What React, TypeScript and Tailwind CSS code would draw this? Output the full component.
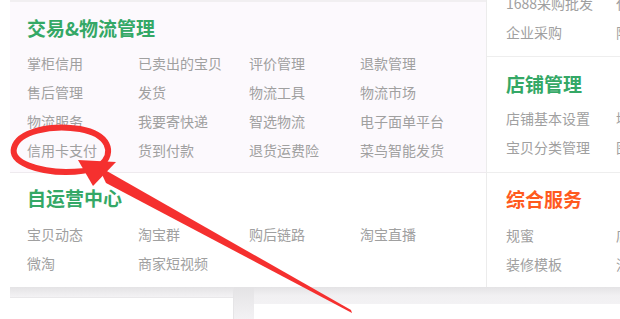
import React from 'react';

const leftTop = [
  ['掌柜信用', '已卖出的宝贝', '评价管理', '退款管理'],
  ['售后管理', '发货', '物流工具', '物流市场'],
  ['物流服务', '我要寄快递', '智选物流', '电子面单平台'],
  ['信用卡支付', '货到付款', '退货运费险', '菜鸟智能发货'],
];

const leftBottom = [
  ['宝贝动态', '淘宝群', '购后链路', '淘宝直播'],
  ['微淘', '商家短视频', '', ''],
];

const Cell = ({ text, w }: { text: string; w: string }) => (
  <div className={`${w} h-[29px] leading-[29px] text-[14px] text-[#a0a0a0] whitespace-nowrap shrink-0`}>{text}</div>
);

function Rows({ rows }: { rows: string[][] }) {
  return (
    <div className="flex flex-col">
      {rows.map((r, i) => (
        <div key={i} className="flex">
          {r.map((t, j) => (
            <Cell key={j} text={t} w="w-[111px]" />
          ))}
        </div>
      ))}
    </div>
  );
}

function RightRows({ rows }: { rows: string[][] }) {
  return (
    <div className="flex flex-col">
      {rows.map((r, i) => (
        <div key={i} className="flex">
          {r.map((t, j) => (
            <Cell key={j} text={t} w="w-[110px]" />
          ))}
        </div>
      ))}
    </div>
  );
}

export default function App() {
  return (
    <div
      className="relative w-[620px] h-[319px] overflow-hidden bg-white"
      style={{ fontFamily: '"Noto Sans CJK SC", "Noto Sans", sans-serif' }}
    >
      {/* 菜单面板 */}
      <div className="ml-[10px] flex h-[287px]">
        <div className="w-[477px] flex flex-col border-r border-[#ececec]">
          <div className="h-[173px] bg-[#fcf9fd] border-b border-[#eeeaee] pl-[17px] pt-[16px] border-t-2 border-t-[#f1eff1]">
            <div className="h-[24px] leading-[24px] text-[19px] font-bold text-[#34a866] -mt-[2px]">交易&amp;物流管理</div>
            <div className="mt-[9px]">
              <Rows rows={leftTop} />
            </div>
          </div>
          <div className="flex-1 bg-white pl-[17px] pt-[13px]">
            <div className="h-[24px] leading-[24px] text-[19px] font-bold text-[#34a866]">自运营中心</div>
            <div className="mt-[10px]">
              <Rows rows={leftBottom} />
            </div>
          </div>
        </div>

        <div className="flex-1 flex flex-col bg-white overflow-hidden">
          <div className="h-[57px] border-b border-[#eeeeee] pl-[19px] overflow-hidden">
            <div className="-mt-[11px]">
              <RightRows rows={[['1688采购批发', '代发'], ['企业采购', '阿里']]} />
            </div>
          </div>
          <div className="h-[116px] border-b border-[#eeeeee] pl-[19px] pt-[15px]">
            <div className="h-[24px] leading-[24px] text-[19px] font-bold text-[#34a866]">店铺管理</div>
            <div className="mt-[8px]">
              <RightRows rows={[['店铺基本设置', '域名'], ['宝贝分类管理', '图片']]} />
            </div>
          </div>
          <div className="flex-1 pl-[19px] pt-[14px]">
            <div className="h-[24px] leading-[24px] text-[19px] font-bold text-[#ff5a1e]">综合服务</div>
            <div className="mt-[10px]">
              <RightRows rows={[['规蜜', '店'], ['装修模板', '流']]} />
            </div>
          </div>
        </div>
      </div>

      {/* 面板下方 */}
      <div className="flex h-[32px]">
        <div className="w-[10px] bg-white" />
        <div className="w-[223px] flex flex-col">
          <div className="h-[11px] bg-gradient-to-b from-[#e4e3e5] to-[#f3f2f4] border-b border-[#e9e8ea]" />
          <div className="flex-1 bg-white" />
        </div>
        <div className="w-[21px] bg-gradient-to-b from-[#e4e3e5] to-[#f3f2f4] border-l border-[#e6e5e7]" />
        <div className="flex-1 flex flex-col">
          <div className="h-[17px] bg-gradient-to-b from-[#e4e3e5] via-[#f1f0f2] to-[#f3f2f4]" />
          <div className="flex-1 bg-white" />
        </div>
      </div>

      {/* 红色标注 */}
      <svg className="absolute left-0 top-0 pointer-events-none" width="620" height="319" viewBox="0 0 620 319">
        <path
          d="M100 166 C 116 152, 108 134, 80 129 C 50 124, 18 132, 14 148 C 10 163, 40 172, 66 172 C 80 172, 90 170, 96 168"
          fill="none"
          stroke="#f5302f"
          strokeWidth="6"
          strokeLinecap="round"
        />
        <polygon points="78,160 93,186 116,162" fill="#f5302f" />
        <polygon points="98,166 106,183 352,313 351,310" fill="#f5302f" />
      </svg>
    </div>
  );
}
